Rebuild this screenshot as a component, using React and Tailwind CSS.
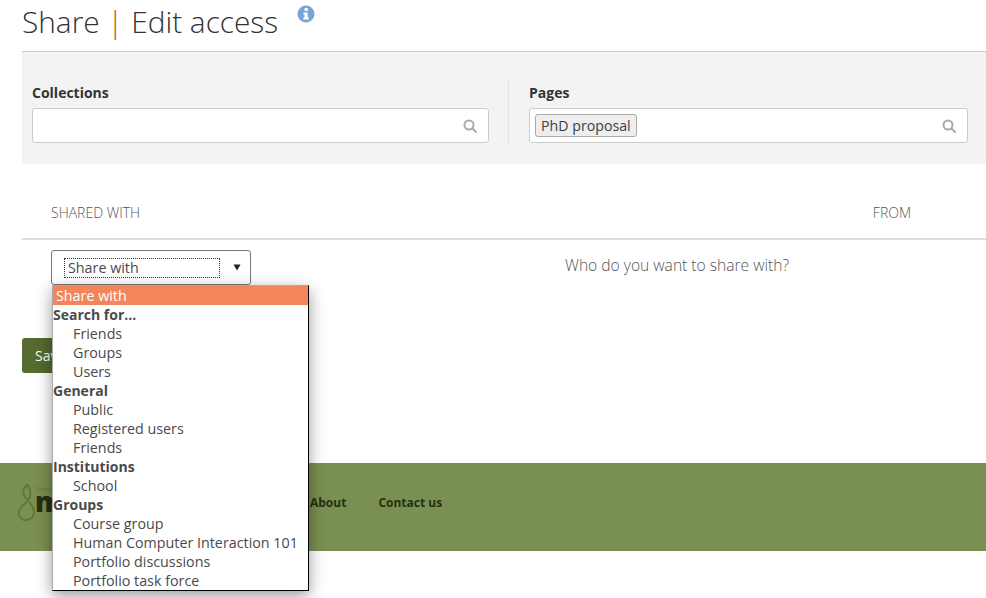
import React from "react";

function SearchIcon() {
  return (
    <svg width="14" height="14" viewBox="0 0 14 14" fill="none" stroke="#aaaaaa" strokeWidth="2">
      <circle cx="6" cy="6" r="4.5" />
      <path d="M9.5 9.5L13 13" strokeLinecap="round" />
    </svg>
  );
}

const groups = [
  { head: "Search for...", items: ["Friends", "Groups", "Users"] },
  { head: "General", items: ["Public", "Registered users", "Friends"] },
  { head: "Institutions", items: ["School"] },
  { head: "Groups", items: ["Course group", "Human Computer Interaction 101", "Portfolio discussions", "Portfolio task force"] },
];

export default function App() {
  return (
    <div className="relative w-[986px] h-[598px] overflow-hidden bg-white text-[#404040] font-['Open_Sans',sans-serif]">
      <div className="pl-[22px]">
        <div className="h-[52px] border-b border-[#cccccc] flex items-start">
          <h1 className="text-[29.8px] leading-[44px] font-light text-[#333333] whitespace-pre">
            Share <span className="text-[#ae6010]">|</span> Edit access
          </h1>
          <svg className="ml-[19px] mt-[5px]" width="18" height="18" viewBox="0 0 18 18">
            <circle cx="9" cy="9" r="8.5" fill="#7ba4d6" />
            <rect x="7.5" y="3" width="3.4" height="3" rx="0.8" fill="#fff" />
            <path d="M6.5 7.5H10.6V12.6H11.8V14.6H6.3V12.6H7.5V9.4H6.5Z" fill="#fff" />
          </svg>
        </div>

        <div className="h-[112px] bg-[#f3f3f3] rounded-bl-[3px] flex pt-[30px] pl-[10px] pr-[18px]">
          <div className="w-[457px]">
            <div className="text-[14px] leading-[22px] font-bold text-[#333333] h-[26px]">Collections</div>
            <div className="h-[35px] bg-white border border-[#cccccc] rounded-[3px] flex items-center justify-end pr-[11px]">
              <SearchIcon />
            </div>
          </div>
          <div className="ml-[19px] w-px h-[60px] bg-[#e2e2e2]"></div>
          <div className="ml-[20px] flex-1">
            <div className="text-[14px] leading-[22px] font-bold text-[#333333] h-[26px]">Pages</div>
            <div className="h-[35px] bg-white border border-[#cccccc] rounded-[3px] flex items-center justify-between pl-[5px] pr-[11px]">
              <span className="h-[23px] px-[5px] bg-[#eeeeee] border border-[#aaaaaa] rounded-[3px] text-[14.2px] leading-[21px] text-[#404040]">PhD proposal</span>
              <SearchIcon />
            </div>
          </div>
        </div>

        <div className="mt-[36px] h-[40px] border-b-2 border-[#dddddd] flex justify-between pl-[29px] pr-[75px] text-[14px] leading-[26px] font-light text-[#555555]">
          <span>SHARED WITH</span>
          <span>FROM</span>
        </div>

        <div className="h-[98px] pt-[10px] pl-[29px] flex items-start">
          <div className="w-[200px] h-[35px] bg-white border border-[#767676] rounded-[3px] flex items-center pl-[12px] pr-[9px]">
            <div className="w-[156px] h-[20px] border border-dotted border-[#333333] pl-[3px] text-[14.3px] leading-[17px] text-[#4a4a4a]">Share with</div>
            <svg className="ml-auto" width="8" height="7" viewBox="0 0 8 7"><path d="M0.5 0.5H7.5L4 6.5Z" fill="#222222" /></svg>
          </div>
          <div className="ml-[314px] mt-[3px] text-[15.6px] leading-[24px] font-light text-[#555555] whitespace-nowrap">Who do you want to share with?</div>
        </div>

        <button className="block h-[35px] w-[80px] text-left pl-[13px] rounded-[3px] bg-[#556b2f] text-white text-[14px]">Save</button>
      </div>

      <div className="mt-[90px] h-[88px] bg-[#7a8f52] flex items-center relative">
        <svg className="absolute left-[17px] top-[21px]" width="20" height="38" viewBox="0 0 20 38" fill="none" stroke="#5f7a35" strokeWidth="2">
          <path d="M11 1C6 3 5 9 8 13C11 17 17 21 17 28C17 34 11 37 7 36C3 35 1 31 2 27C3 23 8 20 11 17C14 13 14 7 11 1Z" />
        </svg>
        <div className="absolute left-[35px] top-[23px] w-[18px] h-[28px] overflow-hidden">
          <div className="h-[7px] pl-[1px] text-[5px] leading-[6px] text-[#5f7a35] whitespace-nowrap">Powered</div>
          <div className="text-[28px] leading-[16px] font-extrabold text-[#26300f] whitespace-nowrap">m</div>
        </div>
        <div className="ml-[310px] flex gap-[32px] text-[12px] font-bold text-[#26300f] mt-[-9px]">
          <span>About</span>
          <span>Contact us</span>
        </div>
      </div>

      <div className="absolute left-[52px] top-[285px] w-[257px] h-[306px] bg-white border border-black border-l-[#aaaaaa] border-t-[#aaaaaa] shadow-[0_5px_15px_rgba(0,0,0,0.4)] text-[14.3px] leading-[19px] text-[#4a4a4a]">
        <div className="h-[19px] bg-[#f4855a] text-white pl-[3px]">Share with</div>
        {groups.map((g) => (
          <div key={g.head}>
            <div className="h-[19px] font-bold text-[14px]">{g.head}</div>
            {g.items.map((it) => (
              <div key={g.head + it} className="h-[19px] pl-[20px]">{it}</div>
            ))}
          </div>
        ))}
      </div>
    </div>
  );
}
